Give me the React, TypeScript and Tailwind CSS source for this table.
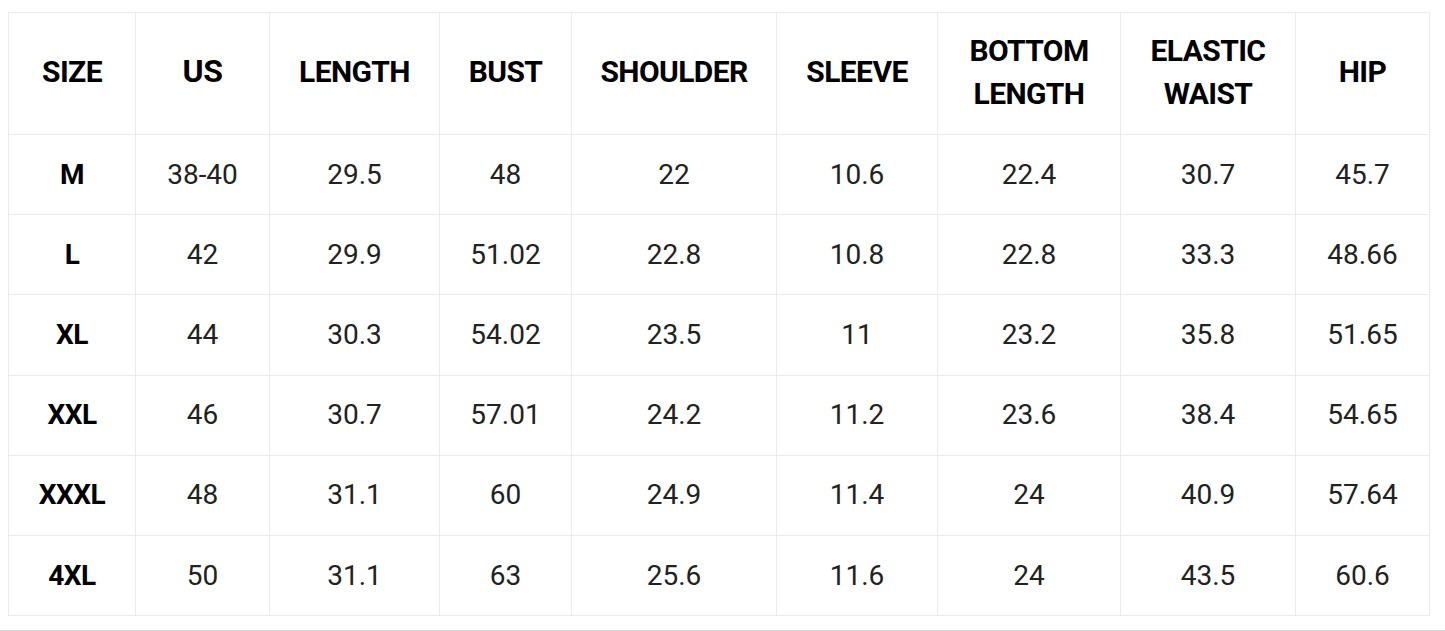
const headers = [
  ["SIZE"],
  ["US"],
  ["LENGTH"],
  ["BUST"],
  ["SHOULDER"],
  ["SLEEVE"],
  ["BOTTOM", "LENGTH"],
  ["ELASTIC", "WAIST"],
  ["HIP"],
];

const widths = [127, 134, 170, 132, 205, 161, 183, 175, 134];

const rows = [
  ["M", "38-40", "29.5", "48", "22", "10.6", "22.4", "30.7", "45.7"],
  ["L", "42", "29.9", "51.02", "22.8", "10.8", "22.8", "33.3", "48.66"],
  ["XL", "44", "30.3", "54.02", "23.5", "11", "23.2", "35.8", "51.65"],
  ["XXL", "46", "30.7", "57.01", "24.2", "11.2", "23.6", "38.4", "54.65"],
  ["XXXL", "48", "31.1", "60", "24.9", "11.4", "24", "40.9", "57.64"],
  ["4XL", "50", "31.1", "63", "25.6", "11.6", "24", "43.5", "60.6"],
];

const App = () => {
  return (
    <div className="w-[1445px] h-[631px] bg-white overflow-hidden font-['Roboto',_'Liberation_Sans',_sans-serif]">
      <div className="pt-[12px] pl-[8px]">
        <table className="border-collapse table-fixed w-[1422px]">
          <colgroup>
            {widths.map((w, i) => (
              <col key={i} style={{ width: w }} />
            ))}
          </colgroup>
          <thead>
            <tr className="h-[122px]">
              {headers.map((h) => (
                <th
                  key={h.join(" ")}
                  className={
                    h[0] === "US"
                      ? "border border-[#ebebeb] text-center align-middle text-[32px] leading-[43px] font-bold text-black tracking-[-0.4px] pb-[4px]"
                      : "border border-[#ebebeb] text-center align-middle text-[30px] leading-[43px] font-bold text-black tracking-[-0.6px] pb-[4px]"
                  }
                >
                  {h.map((line) => (
                    <div key={line}>{line}</div>
                  ))}
                </th>
              ))}
            </tr>
          </thead>
          <tbody>
            {rows.map((r) => (
              <tr key={r[0]} className="h-[80.2px]">
                {r.map((cell, i) => (
                  <td
                    key={i}
                    className={
                      i === 0
                        ? "border border-[#ebebeb] text-center align-middle text-[28px] font-bold text-black tracking-[-0.5px]"
                        : "border border-[#ebebeb] text-center align-middle text-[28px] text-[#222]"
                    }
                  >
                    {cell}
                  </td>
                ))}
              </tr>
            ))}
          </tbody>
        </table>
      </div>
      <div className="mt-[14px] h-[2px] bg-[#d6d6d6]" />
    </div>
  );
};

export default App;
